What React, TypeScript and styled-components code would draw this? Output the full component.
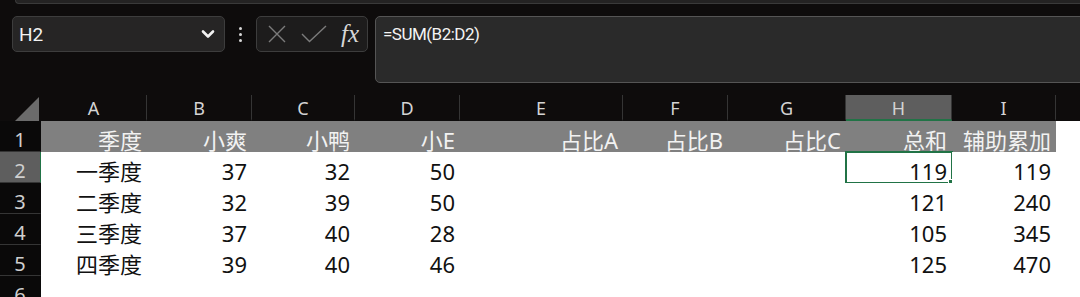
import React from "react";
import styled, { createGlobalStyle } from "styled-components";

const GlobalStyle = createGlobalStyle`
  html, body {
    margin: 0;
    padding: 0;
    background: #0e0c0c;
    overflow: hidden;
  }
`;

const columns = ["A", "B", "C", "D", "E", "F", "G", "H", "I"];
const colWidths = [106, 105, 103, 105, 163, 105, 118, 106, 104];

const rows: string[][] = [
  ["季度", "小爽", "小鸭", "小E", "占比A", "占比B", "占比C", "总和", "辅助累加"],
  ["一季度", "37", "32", "50", "", "", "", "119", "119"],
  ["二季度", "32", "39", "50", "", "", "", "121", "240"],
  ["三季度", "37", "40", "28", "", "", "", "105", "345"],
  ["四季度", "39", "40", "46", "", "", "", "125", "470"],
  ["", "", "", "", "", "", "", "", ""],
];

const activeCol = 7;
const activeRow = 1;

const App: React.FC = () => {
  return (
    <Page>
      <GlobalStyle />
      <TopStrip />
      <Toolbar>
        <NameBox>
          <span>H2</span>
          <svg width="14" height="10" viewBox="0 0 14 10">
            <path d="M2 2.5 L7 7.5 L12 2.5" fill="none" stroke="#f2f2f2" strokeWidth="2.6" strokeLinecap="round" strokeLinejoin="round" />
          </svg>
        </NameBox>
        <Dots>
          <i />
          <i />
          <i />
        </Dots>
        <ButtonGroup>
          <svg width="20" height="20" viewBox="0 0 20 20">
            <path d="M2 2 L18 18 M18 2 L2 18" stroke="#7b7b7b" strokeWidth="1.4" />
          </svg>
          <svg width="26" height="20" viewBox="0 0 26 20">
            <path d="M1 10 L8.5 17.5 L25 2" fill="none" stroke="#7b7b7b" strokeWidth="1.4" />
          </svg>
          <Fx>fx</Fx>
        </ButtonGroup>
        <FormulaBar>=SUM(B2:D2)</FormulaBar>
      </Toolbar>
      <Sheet>
        <Corner>
          <svg width="24" height="24" viewBox="0 0 24 24">
            <path d="M24 0 L24 24 L0 24 Z" fill="#6b6b6b" />
          </svg>
        </Corner>
        {columns.map((c, i) => (
          <ColHeader key={c} $active={i === activeCol}>
            {c}
          </ColHeader>
        ))}
        <div />
        {rows.map((r, ri) => (
          <React.Fragment key={ri}>
            <RowHeader $active={ri === activeRow}>{ri + 1}</RowHeader>
            {r.map((v, ci) => (
              <Cell key={ci} $head={ri === 0}>
                {v}
                {ri === activeRow && ci === activeCol && (
                  <Selection>
                    <FillHandle />
                  </Selection>
                )}
              </Cell>
            ))}
            <Cell />
          </React.Fragment>
        ))}
      </Sheet>
    </Page>
  );
};

const Page = styled.div`
  width: 1080px;
  height: 297px;
  overflow: hidden;
  background: #0e0c0c;
  font-family: "Noto Sans", "Noto Sans CJK SC", sans-serif;
`;

const TopStrip = styled.div`
  height: 3px;
  margin-left: 15px;
  background: #242323;
  border-bottom: 1px solid #3a3a3a;
  border-left: 1px solid #3a3a3a;
  border-bottom-left-radius: 5px;
`;

const Toolbar = styled.div`
  display: flex;
  align-items: flex-start;
  height: 79px;
  padding: 12px 0 0 12px;
  margin-right: -30px;
`;

const NameBox = styled.div`
  box-sizing: border-box;
  width: 213px;
  height: 36px;
  display: flex;
  align-items: center;
  justify-content: space-between;
  padding: 0 9px 0 6px;
  background: #262525;
  border: 1px solid #3d3d3d;
  border-radius: 5px;
  color: #f2f2f2;
  font-family: "Roboto", sans-serif;
  font-size: 19px;
`;

const Dots = styled.div`
  width: 31px;
  height: 36px;
  display: flex;
  flex-direction: column;
  align-items: center;
  justify-content: center;
  gap: 3px;
  i {
    width: 3px;
    height: 3px;
    border-radius: 50%;
    background: #d8d8d8;
  }
`;

const ButtonGroup = styled.div`
  box-sizing: border-box;
  width: 112px;
  height: 36px;
  display: flex;
  align-items: center;
  justify-content: space-between;
  padding: 0 8px 0 10px;
  background: #1d1c1c;
  border: 1px solid #3d3d3d;
  border-radius: 5px;
`;

const Fx = styled.span`
  font-family: "Liberation Serif", "DejaVu Serif", serif;
  font-style: italic;
  font-size: 25px;
  color: #d6d6d6;
  line-height: 1;
  margin-top: -2px;
`;

const FormulaBar = styled.div`
  box-sizing: border-box;
  flex: 1;
  height: 67px;
  margin-left: 7px;
  padding: 5px 7px;
  background: #2a2a2a;
  border: 1px solid #555;
  border-radius: 5px;
  color: #f4f4f4;
  font-family: "Roboto", sans-serif;
  font-size: 17px;
  letter-spacing: -0.5px;
  line-height: 24px;
`;

const Sheet = styled.div`
  display: grid;
  grid-template-columns: 41px ${colWidths.map((w) => `${w}px`).join(" ")} 1fr;
  grid-template-rows: 26px repeat(6, 31px);
`;

const Corner = styled.div`
  display: flex;
  align-items: flex-end;
  justify-content: flex-end;
  padding-right: 2px;
`;

const ColHeader = styled.div<{ $active: boolean }>`
  box-sizing: border-box;
  display: flex;
  align-items: flex-end;
  justify-content: center;
  padding-bottom: 2px;
  font-size: 18px;
  line-height: 1;
  color: #d4d4d4;
  background: ${(p) => (p.$active ? "#5e5e5e" : "transparent")};
  border-right: 1px solid #353535;
  border-bottom: 2px solid ${(p) => (p.$active ? "#217346" : "transparent")};
`;

const RowHeader = styled.div<{ $active: boolean }>`
  box-sizing: border-box;
  display: flex;
  align-items: flex-end;
  justify-content: center;
  padding-bottom: 1px;
  font-size: 20px;
  line-height: 1;
  color: #cfcfcf;
  background: ${(p) => (p.$active ? "#5e5e5e" : "#0a0909")};
  border-bottom: 1px solid #353535;
  border-right: 1px solid ${(p) => (p.$active ? "#217346" : "#0a0909")};
`;

const Cell = styled.div<{ $head?: boolean }>`
  position: relative;
  box-sizing: border-box;
  display: flex;
  align-items: flex-end;
  justify-content: flex-end;
  padding: 0 5px 1px 0;
  font-family: "Noto Sans", "Noto Sans CJK SC", sans-serif;
  font-size: 22px;
  line-height: 1;
  white-space: nowrap;
  color: ${(p) => (p.$head ? "#f2f2f2" : "#111")};
  background: ${(p) => (p.$head ? "#808080" : "#ffffff")};
`;

const Selection = styled.div`
  position: absolute;
  left: -1px;
  top: -1px;
  right: -1px;
  bottom: -1px;
  border: 2px solid #217346;
`;

const FillHandle = styled.div`
  position: absolute;
  right: -5px;
  bottom: -5px;
  width: 6px;
  height: 6px;
  background: #217346;
  border: 1px solid #ffffff;
`;

export default App;
